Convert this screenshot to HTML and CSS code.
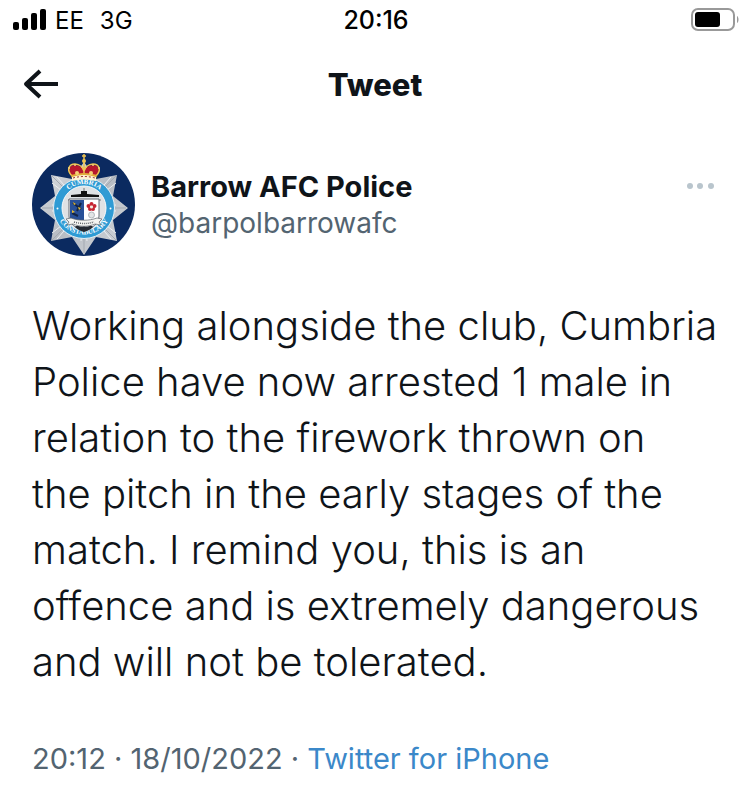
FILE: index.html
```html
<!DOCTYPE html>
<html lang="en">
<head>
    <meta charset="UTF-8">
    <meta name="viewport" content="width=device-width, initial-scale=1.0">
    <title>Tweet</title>
    <link rel="stylesheet" href="styles.css">
</head>
<body>
    <div class="status-bar">
        <div class="carrier">
            <svg class="signal" width="34" height="22" viewBox="0 0 34 22" aria-hidden="true">
                <rect x="0" y="13" width="6" height="8" rx="2"/>
                <rect x="9" y="9" width="6" height="12" rx="2"/>
                <rect x="18" y="4" width="6" height="17" rx="2"/>
                <rect x="27" y="0" width="6" height="21" rx="2"/>
            </svg>
            <span>EE</span>
            <span class="network">3G</span>
        </div>
        <div class="clock">20:16</div>
        <svg class="battery" width="48" height="24" viewBox="0 0 48 24" aria-hidden="true">
            <rect x="1" y="1" width="42" height="21" rx="6" fill="none" stroke="#999" stroke-width="2"/>
            <rect x="4" y="4" width="25" height="15" rx="3"/>
            <path d="M46 8c2 1 2 6 0 7z" fill="#999"/>
        </svg>
    </div>

    <header class="header">
        <button class="back" aria-label="Back">
            <svg width="36" height="32" viewBox="0 0 36 32" fill="none" stroke="#0f1419" stroke-width="4" stroke-linejoin="round" aria-hidden="true">
                <path d="M35 16H3M17 3L3 16l14 13"/>
            </svg>
        </button>
        <h1>Tweet</h1>
    </header>

    <main class="tweet">
        <div class="author">
            <svg class="avatar" width="103" height="103" viewBox="0 0 103 103" role="img" aria-label="Cumbria Constabulary badge">
                <defs>
                    <clipPath id="round"><circle cx="51.5" cy="51.5" r="51.5"/></clipPath>
                    <linearGradient id="silver" x1="0" y1="0" x2="1" y2="1">
                        <stop offset="0" stop-color="#dcdfe2"/>
                        <stop offset=".5" stop-color="#b7bcc3"/>
                        <stop offset="1" stop-color="#d3d7db"/>
                    </linearGradient>
                    <path id="arc-top" d="M28 55a24 24 0 0 1 48 0"/>
                    <path id="arc-bottom" d="M23.500 53a28.500 28.500 0 0 0 57 0"/>
                </defs>
                <g clip-path="url(#round)">
                    <rect width="103" height="103" fill="#0b2a60"/>
                    <path fill="url(#silver)" d="M52 9l12 17 21-4-4 21 15 12-15 12 4 21-21-4-12 18-12-18-21 4 4-21L8 55l15-12-4-21 21 4z"/>
                    <g stroke="#a3a9b1" stroke-width="1">
                        <path d="M20 23l64 64M84 23L20 87M10 55h84M52 12v88"/>
                        <path stroke="#eceef0" d="M25 24l54 62M79 24L25 86M20 30l64 50M84 30L20 80M20 52l64 6M20 58l64-6M49 88l6-66M55 88l-6-66"/>
                    </g>
                    <circle cx="52" cy="55" r="30.500" fill="#2f9bd4" stroke="#e4eef4" stroke-width="1"/>
                    <circle cx="52" cy="55" r="22" fill="#dfe2e4" stroke="#f7f9fa" stroke-width="1"/>
                    <g class="badge-text">
                        <text><textPath href="#arc-top" startOffset="50%" text-anchor="middle">CUMBRIA</textPath></text>
                        <text><textPath href="#arc-bottom" startOffset="50%" text-anchor="middle">CONSTABULARY</textPath></text>
                    </g>
                    <circle cx="25.500" cy="55.500" r="1" fill="#fff"/>
                    <circle cx="78.500" cy="55.500" r="1" fill="#fff"/>
                    <!-- submarine above the shield -->
                    <path fill="#111" d="M39 44v-2l10-1v-3h6v3l12 1v2z"/>
                    <path stroke="#777" stroke-width="1" d="M52 35v3M36 47h3M66 47h3"/>
                    <!-- shield -->
                    <path fill="#fff" stroke="#646a73" d="M37 46h30v17c0 8-8 13-15 15-7-2-15-7-15-15z"/>
                    <path fill="#285098" d="M38 47h14v20H38z"/>
                    <path fill="none" stroke="#122446" stroke-width="2" d="M41 50l8 6M49 50l-4 8M40 60l6 3"/>
                    <path fill="#e7bd35" d="M41 49l3 2-2 1zM46 54l3 1-2 2zM40 57l3 2-3 1z"/>
                    <g fill="#c62532">
                        <circle cx="59.500" cy="51" r="2"/><circle cx="56.500" cy="53" r="2"/><circle cx="62.500" cy="53" r="2"/>
                        <circle cx="58" cy="56" r="2"/><circle cx="61" cy="56" r="2"/>
                    </g>
                    <circle cx="59.500" cy="54" r="1.500" fill="#f4ece2"/>
                    <circle cx="59.500" cy="62" r="3" fill="#e2e5e6" stroke="#a5abb0" stroke-width=".8"/>
                    <path fill="#252a32" d="M43 74c3-3 5 1 9-1 4 2 6-2 9 1-3 3-6 4-9 5-3-1-6-2-9-5z"/>
                    <path fill="#f5f5f2" stroke="#5e646b" stroke-width=".7" d="M34 66l5-1c8 3 18 3 26 0l5 1-3 3 2 3-6-1c-7 3-15 3-22 0l-6 1 2-3z"/>
                    <path fill="none" stroke="#62666b" stroke-width="1.500" stroke-dasharray="1 1" d="M42 69c7 2 13 2 20 0"/>
                    <!-- crown -->
                    <path fill="#b7182d" d="M40 23c-5-5-3-11 3-11 4 0 7 2 9 6 2-4 5-6 9-6 6 0 8 6 3 11z"/>
                    <path fill="none" stroke="#efc451" stroke-width="1.500" d="M40 23c-6-6-3-12 3-12 5 0 8 4 9 7 1-3 4-7 9-7 6 0 9 6 3 12M52 7v16M50 3h4M52 1v6"/>
                    <circle cx="52" cy="8" r="2" fill="#efc451"/>
                    <path fill="#e1ad3b" d="M39 22q13-4 26 0l-1 4q-12-3-24 0z"/>
                    <path fill="#fff5d5" d="M40 24q12-4 24 0v4q-12-3-24 0z"/>
                    <path fill="none" stroke="#982b2f" stroke-width="1" stroke-dasharray="2 2" d="M41 25q11-3 22 0"/>
                    <g fill="#f3d276">
                        <circle cx="37" cy="15" r="1"/><circle cx="43" cy="12" r="1"/><circle cx="61" cy="12" r="1"/><circle cx="67" cy="15" r="1"/>
                        <circle cx="45" cy="20" r="2"/><circle cx="59" cy="20" r="2"/>
                    </g>
                </g>
            </svg>
            <div class="names">
                <div class="name">Barrow AFC Police</div>
                <div class="handle">@barpolbarrowafc</div>
            </div>
            <button class="more" aria-label="More">
                <svg width="28" height="8" viewBox="0 0 28 8" fill="#b9c5cd" aria-hidden="true">
                    <circle cx="4" cy="4" r="3"/>
                    <circle cx="14" cy="4" r="3"/>
                    <circle cx="25" cy="4" r="3"/>
                </svg>
            </button>
        </div>

        <p class="text">Working alongside the club, Cumbria Police have now arrested 1 male in relation to the firework thrown on<br>the pitch in the early stages of the match. I remind you, this is an offence and is extremely dangerous and will not be tolerated.</p>

        <div class="meta">20:12 · 18/10/2022 · <a href="#">Twitter for iPhone</a></div>
    </main>
</body>
</html>
```
FILE: styles.css
```css
* {
    box-sizing: border-box;
}
body {
    margin: 0;
    background: #fff;
    color: #0f1419;
    font-family: Inter, "Liberation Sans", sans-serif;
}
button {
    padding: 0;
    border: none;
    background: none;
    cursor: pointer;
}
svg {
    display: block;
}
.status-bar {
    display: grid;
    grid-template-columns: 1fr auto 1fr;
    align-items: center;
    height: 40px;
    padding: 0 11px 0 13px;
    color: #000;
    font-size: 24px;
}
.carrier {
    display: flex;
    align-items: center;
    gap: 8px;
}
.network {
    margin-left: 8px;
}
.clock {
    font-size: 25px;
    font-weight: 500;
}
.battery {
    justify-self: end;
}
.header {
    display: grid;
    grid-template-columns: 1fr auto 1fr;
    align-items: center;
    height: 88px;
    padding: 0 23px;
}
.back {
    justify-self: start;
}
h1 {
    margin: 0;
    font-size: 31px;
    font-weight: 800;
}
.tweet {
    padding: 25px 28px 25px 32px;
}
.author {
    display: flex;
    gap: 16px;
}
.names {
    flex: 1;
    padding-top: 16px;
    font-size: 28px;
    line-height: 36px;
}
.name {
    font-size: 29px;
    font-weight: 700;
}
.handle {
    color: #536471;
}
.more {
    align-self: flex-start;
    margin: 29px 8px 0 0;
}
.badge-text {
    fill: #fff;
    font: 700 7px "Liberation Serif", serif;
}
.text {
    margin: 42px 0 51px;
    font-size: 40px;
    font-weight: 350;
    line-height: 56px;
}
.meta {
    color: #536471;
    font-size: 29px;
    line-height: 36px;
}
.meta a {
    color: #3b88c9;
    text-decoration: none;
}
```
